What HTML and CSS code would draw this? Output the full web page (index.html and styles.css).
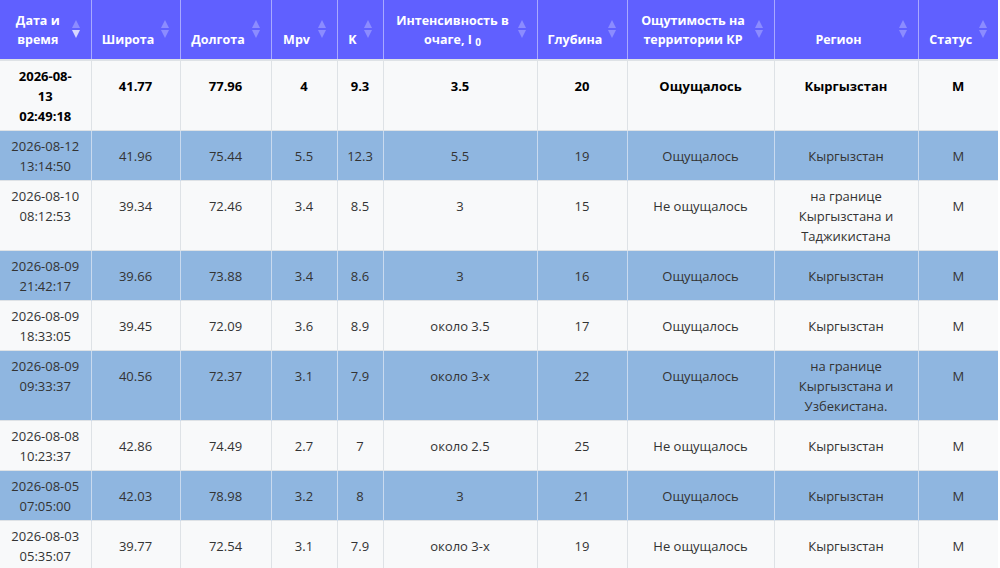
FILE: index.html
```html
<!DOCTYPE html>
<html lang="ru">
<head>
<meta charset="utf-8">
<title>Землетрясения</title>
<link rel="stylesheet" href="styles.css">
</head>
<body>
<table class="quakes">
  <colgroup>
    <col class="w-date"><col class="w-lat"><col class="w-lon"><col class="w-mpv"><col class="w-k">
    <col class="w-int"><col class="w-depth"><col class="w-felt"><col class="w-region"><col class="w-status">
  </colgroup>
  <thead>
    <tr>
      <th class="sorted">Дата и время</th>
      <th>Широта</th>
      <th>Долгота</th>
      <th>Mpv</th>
      <th>K</th>
      <th>Интенсивность в очаге, I&nbsp;<sub>0</sub></th>
      <th>Глубина</th>
      <th>Ощутимость на территории КР</th>
      <th>Регион</th>
      <th>Статус</th>
    </tr>
  </thead>
  <tbody>
    <tr class="latest">
      <td class="multi">2026-08-<br>13<br>02:49:18</td>
      <td>41.77</td><td>77.96</td><td>4</td><td>9.3</td><td>3.5</td><td>20</td>
      <td>Ощущалось</td><td>Кыргызстан</td><td>M</td>
    </tr>
    <tr class="blue">
      <td class="multi">2026-08-12 13:14:50</td>
      <td>41.96</td><td>75.44</td><td>5.5</td><td>12.3</td><td>5.5</td><td>19</td>
      <td>Ощущалось</td><td>Кыргызстан</td><td>M</td>
    </tr>
    <tr>
      <td class="multi">2026-08-10 08:12:53</td>
      <td>39.34</td><td>72.46</td><td>3.4</td><td>8.5</td><td>3</td><td>15</td>
      <td>Не ощущалось</td><td class="multi">на границе Кыргызстана и Таджикистана</td><td>M</td>
    </tr>
    <tr class="blue">
      <td class="multi">2026-08-09 21:42:17</td>
      <td>39.66</td><td>73.88</td><td>3.4</td><td>8.6</td><td>3</td><td>16</td>
      <td>Ощущалось</td><td>Кыргызстан</td><td>M</td>
    </tr>
    <tr>
      <td class="multi">2026-08-09 18:33:05</td>
      <td>39.45</td><td>72.09</td><td>3.6</td><td>8.9</td><td>около 3.5</td><td>17</td>
      <td>Ощущалось</td><td>Кыргызстан</td><td>M</td>
    </tr>
    <tr class="blue">
      <td class="multi">2026-08-09 09:33:37</td>
      <td>40.56</td><td>72.37</td><td>3.1</td><td>7.9</td><td>около 3-х</td><td>22</td>
      <td>Ощущалось</td><td class="multi">на границе Кыргызстана и Узбекистана.</td><td>M</td>
    </tr>
    <tr>
      <td class="multi">2026-08-08 10:23:37</td>
      <td>42.86</td><td>74.49</td><td>2.7</td><td>7</td><td>около 2.5</td><td>25</td>
      <td>Не ощущалось</td><td>Кыргызстан</td><td>M</td>
    </tr>
    <tr class="blue">
      <td class="multi">2026-08-05 07:05:00</td>
      <td>42.03</td><td>78.98</td><td>3.2</td><td>8</td><td>3</td><td>21</td>
      <td>Ощущалось</td><td>Кыргызстан</td><td>M</td>
    </tr>
    <tr>
      <td class="multi">2026-08-03 05:35:07</td>
      <td>39.77</td><td>72.54</td><td>3.1</td><td>7.9</td><td>около 3-х</td><td>19</td>
      <td>Не ощущалось</td><td>Кыргызстан</td><td>M</td>
    </tr>
  </tbody>
</table>
</body>
</html>
```
FILE: styles.css
```css
html, body {
  margin: 0;
  padding: 0;
  background: #ffffff;
}

.quakes {
  width: 998px;
  table-layout: fixed;
  border-collapse: collapse;
  font-family: "Open Sans", "Noto Sans", sans-serif;
  font-size: 13px;
  color: #333333;
}

.w-date { width: 91px; }
.w-lat { width: 89px; }
.w-lon { width: 91px; }
.w-mpv { width: 66px; }
.w-k { width: 46px; }
.w-int { width: 154px; }
.w-depth { width: 90px; }
.w-felt { width: 147px; }
.w-region { width: 144px; }
.w-status { width: 80px; }

.quakes th {
  background-color: #6060ff;
  background-image: url("data:image/svg+xml,%3Csvg xmlns='http://www.w3.org/2000/svg' width='8' height='18' viewBox='0 0 8 18'%3E%3Cpath d='M0 8L4 0L8 8Z' fill='%23ffffff' fill-opacity='0.28'/%3E%3Cpath d='M0 10L4 18L8 10Z' fill='%23ffffff' fill-opacity='0.28'/%3E%3C/svg%3E");
  background-repeat: no-repeat;
  background-position: right 11px top 20px;
  color: #ffffff;
  font-size: 12.5px;
  font-weight: 700;
  line-height: 19px;
  text-align: center;
  vertical-align: bottom;
  height: 38px;
  padding: 11px 25px 10px 10px;
  border-left: 1px solid #a9a9ff;
  border-bottom: 2px solid #dee2e6;
}

.quakes th:first-child { border-left: none; }

.quakes th.sorted {
  background-image: url("data:image/svg+xml,%3Csvg xmlns='http://www.w3.org/2000/svg' width='8' height='18' viewBox='0 0 8 18'%3E%3Cpath d='M0 8L4 0L8 8Z' fill='%23ffffff' fill-opacity='0.28'/%3E%3Cpath d='M0 10L4 18L8 10Z' fill='%23ffffff' fill-opacity='0.75'/%3E%3C/svg%3E");
}

.quakes th sub {
  font-size: 10px;
  line-height: 0;
  vertical-align: -2px;
}

.quakes td {
  text-align: center;
  vertical-align: top;
  line-height: 20px;
  padding: 15px 5px 14px;
  border-top: 1px solid #dee2e6;
  border-left: 1px solid #dee2e6;
  background: #f8f9fa;
}

.quakes td.multi { padding-top: 5px; padding-bottom: 4px; }
.quakes td:first-child { border-left: none; }

.quakes tr.blue td {
  background: #8fb6e0;
  border-left-color: #c9daef;
}

.quakes tr.latest td {
  font-weight: 700;
  color: #000000;
}
```
